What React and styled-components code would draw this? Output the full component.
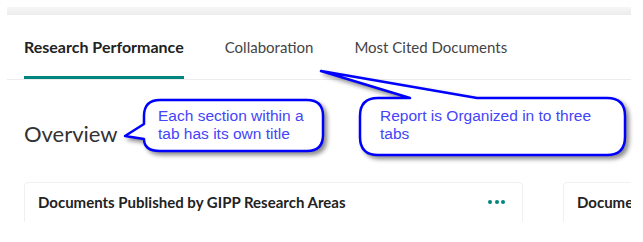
import React from 'react';
import styled, { createGlobalStyle } from 'styled-components';

const GlobalStyle = createGlobalStyle`
  body {
    margin: 0;
    background: #fff;
    font-family: Lato, "Noto Sans", sans-serif;
  }
`;

const Page = styled.div`
  position: relative;
  width: 643px;
  height: 242px;
  overflow: hidden;
`;

const Frame = styled.div`
  margin: 7px 0 0 7px;
  width: 624px;
  height: 215px;
  overflow: hidden;
  background: #fff;
`;

const TopStrip = styled.div`
  height: 8px;
  background: linear-gradient(#f6f6f6, #ececec);
`;

const TabBar = styled.div`
  display: flex;
  gap: 41px;
  height: 64px;
  padding: 0 17px;
  border-bottom: 1px solid #ececec;
`;

const Tab = styled.div`
  display: flex;
  align-items: center;
  font-size: ${p => (p.active ? '16px' : '15px')};
  font-weight: ${p => (p.active ? 700 : 400)};
  color: ${p => (p.active ? '#222' : '#444')};
  border-bottom: 3px solid ${p => (p.active ? '#00857f' : 'transparent')};
  padding-top: 2px;
`;

const Content = styled.div`
  padding: 0 17px;
`;

const SectionTitle = styled.h2`
  margin: 40px 0 0;
  font-size: 22px;
  line-height: 28px;
  font-weight: 400;
  color: #333;
`;

const CardRow = styled.div`
  display: flex;
  gap: 40px;
  margin-top: 34px;
`;

const Card = styled.div`
  flex: 0 0 499px;
  height: 120px;
  box-sizing: border-box;
  border: 1px solid #edf1ef;
  border-radius: 4px;
  padding: 9px 17px 0 13px;
  overflow: hidden;
`;

const CardHeader = styled.div`
  display: flex;
  align-items: center;
  justify-content: space-between;
  height: 20px;
`;

const CardTitle = styled.div`
  font-size: 15px;
  font-weight: 700;
  color: #222;
  white-space: nowrap;
`;

const Dots = styled.div`
  display: flex;
  gap: 2.5px;
  span {
    width: 4px;
    height: 4px;
    border-radius: 50%;
    background: #00857f;
  }
`;

const Overlay = styled.svg`
  position: absolute;
  inset: 0;
  pointer-events: none;
`;

const Bubble = styled.path`
  fill: #fff;
  stroke: #0000ff;
  stroke-width: 2.5;
  stroke-linejoin: round;
  filter: drop-shadow(3px 3px 2px rgba(0, 0, 0, 0.45));
`;

const Note = styled.div`
  position: absolute;
  left: ${p => p.x}px;
  top: ${p => p.y}px;
  width: ${p => p.w}px;
  font-family: "Liberation Sans", Arial, sans-serif;
  font-size: 15.5px;
  line-height: 18px;
  color: #4444fa;
`;

export default function App() {
  return (
    <>
      <GlobalStyle />
      <Page>
        <Frame>
          <TopStrip />
          <TabBar>
            <Tab active>Research Performance</Tab>
            <Tab>Collaboration</Tab>
            <Tab>Most Cited Documents</Tab>
          </TabBar>
          <Content>
            <SectionTitle>Overview</SectionTitle>
            <CardRow>
              <Card>
                <CardHeader>
                  <CardTitle>Documents Published by GIPP Research Areas</CardTitle>
                  <Dots>
                    <span />
                    <span />
                    <span />
                  </Dots>
                </CardHeader>
              </Card>
              <Card>
                <CardHeader>
                  <CardTitle>Documents Published by Year</CardTitle>
                </CardHeader>
              </Card>
            </CardRow>
          </Content>
        </Frame>

        <Overlay width="643" height="242" viewBox="0 0 643 242">
          <Bubble d="M 160 100 H 307 Q 323 100 323 116 V 135 Q 323 151 307 151 H 160 Q 144 151 144 139 L 125 136 L 144 124 V 116 Q 144 100 160 100 Z" />
          <Bubble d="M 378 98 H 410 L 321 71 L 477 98 H 607 Q 625 98 625 116 V 137 Q 625 155 607 155 H 378 Q 360 155 360 137 V 116 Q 360 98 378 98 Z" />
        </Overlay>
        <Note x={158} y={107} w={160}>Each section within a tab has its own title</Note>
        <Note x={380} y={107} w={240}>Report is Organized in to three tabs</Note>
      </Page>
    </>
  );
}
